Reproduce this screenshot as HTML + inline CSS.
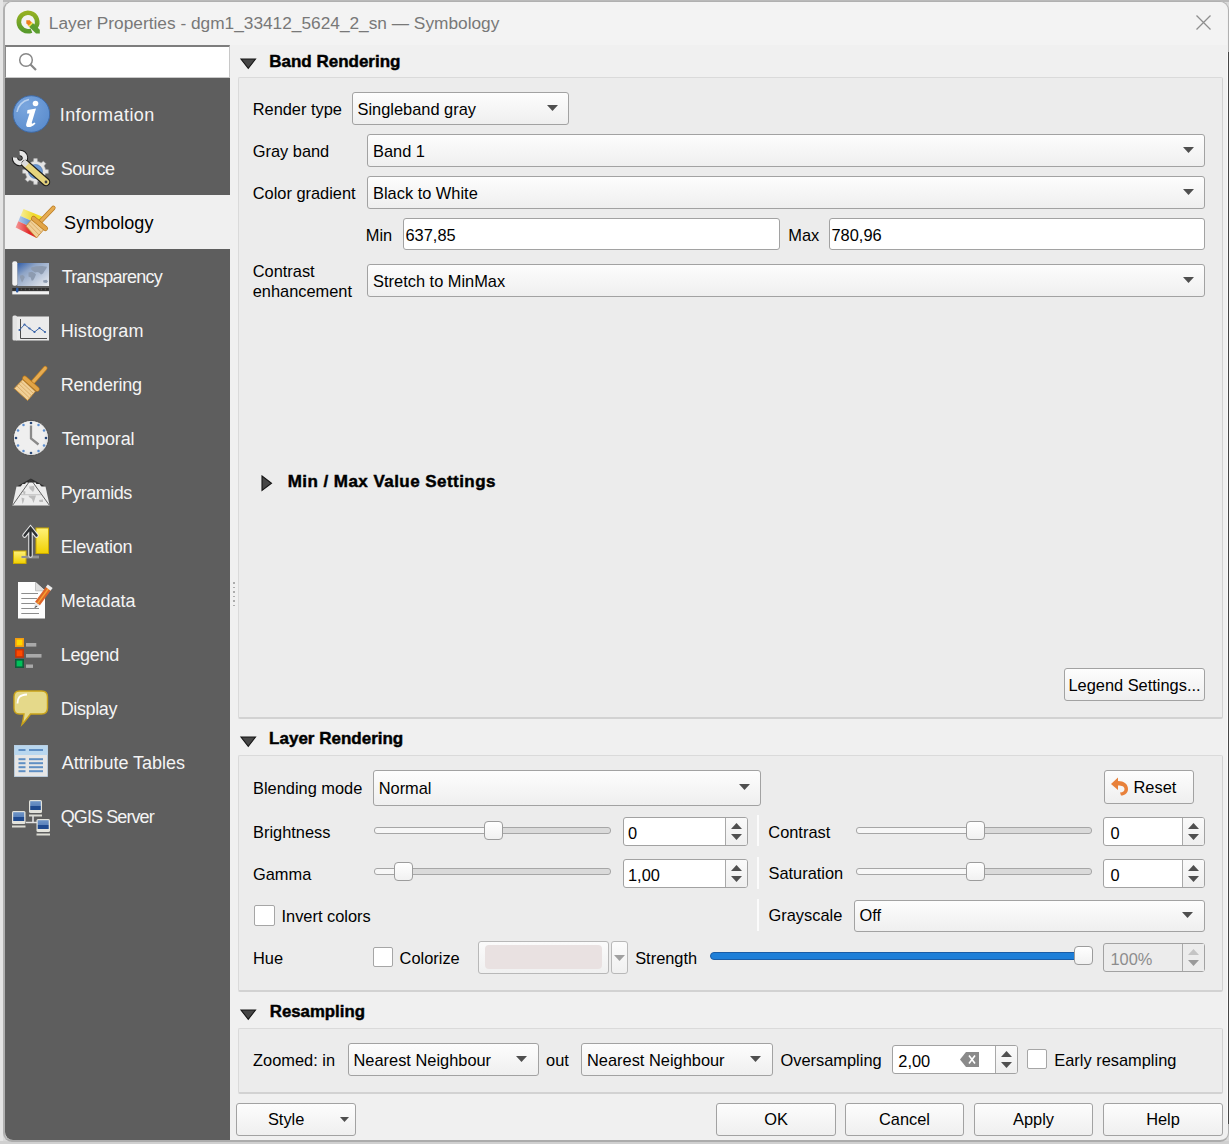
<!DOCTYPE html>
<html><head><meta charset="utf-8"><style>
html,body{margin:0;padding:0}
body{width:1229px;height:1144px;overflow:hidden;position:relative;background:#d9d9d9;font-family:"Liberation Sans",sans-serif}
.t{position:absolute;white-space:pre;line-height:1;font-family:"Liberation Sans",sans-serif}
svg{position:absolute;overflow:visible}
</style></head><body>
<div style="position:absolute;left:0px;top:0px;width:1229px;height:2px;box-sizing:border-box;background:#b9b9b9;"></div>
<div style="position:absolute;left:0px;top:0px;width:3px;height:1144px;box-sizing:border-box;background:#e4e4e4;"></div>
<div style="position:absolute;left:0px;top:1141px;width:1229px;height:3px;box-sizing:border-box;background:#d0d0d0;"></div>
<div style="position:absolute;left:3px;top:1px;width:1226px;height:1141px;box-sizing:border-box;background:#f0f0f0;border:1px solid #b0b0b0;border-left-width:2px;border-bottom:2px solid #acacac;border-radius:9px;"></div>
<div style="position:absolute;left:1227px;top:52px;width:1px;height:1072px;box-sizing:border-box;background:#fafafa;"></div>
<div style="position:absolute;left:1228px;top:52px;width:1px;height:1072px;box-sizing:border-box;background:#464646;"></div>
<div style="position:absolute;left:5px;top:2px;width:1222px;height:43px;box-sizing:border-box;background:#f3f3f3;border-radius:8px 8px 0 0;"></div>
<div class="t" style="left:48.8px;top:14.66px;font-size:17.3px;color:#787878;font-weight:400;">Layer Properties - dgm1_33412_5624_2_sn — Symbology</div>
<svg style="left:1196px;top:15px" width="15" height="15"><path d="M0.5,0.5 L14.5,14.5 M14.5,0.5 L0.5,14.5" stroke="#8e8e8e" stroke-width="1.3"/></svg>
<svg style="left:13.7px;top:7.5px" width="28" height="28" viewBox="0 0 28 28">
<defs><linearGradient id="qg" x1="0" y1="0" x2="0" y2="1"><stop offset="0" stop-color="#93b023"/><stop offset="1" stop-color="#589a2c"/></linearGradient></defs>
<path d="M 21.54 19.28 A 9.2 9.2 0 1 0 17.45 22.53" fill="none" stroke="url(#qg)" stroke-width="4.6"/>
<path d="M14.8,18.6 L18.6,14.8 L25.8,21.8 L25.8,25.6 L22,25.6 Z" fill="#5c9e30"/>
<path d="M15.3,15.3 L17.2,17.2" stroke="#f2e34a" stroke-width="5.2"/>
<path d="M12.3,12.3 L15.8,12.3 L17.6,14.6 L14.8,17.4 L12.3,15.6 Z" fill="#ef7d1c"/>
</svg>
<div style="position:absolute;left:5px;top:45px;width:225px;height:33px;box-sizing:border-box;background:#fff;border-top:2px solid #7d7d7d;border-left:1px solid #8a8a8a;border-right:1px solid #c8c8c8;border-bottom:1px solid #c9c9c9;"></div>
<svg style="left:17px;top:51px" width="22" height="22"><circle cx="9" cy="9" r="6.3" fill="none" stroke="#878787" stroke-width="1.5"/><path d="M13.5,13.5 L19,19" stroke="#878787" stroke-width="2.2"/></svg>
<div style="position:absolute;left:5px;top:78px;width:225px;height:1062px;box-sizing:border-box;background:#5e5e5e;border-bottom-left-radius:8px;"></div>
<div style="position:absolute;left:5px;top:195px;width:225px;height:54px;box-sizing:border-box;background:#f0f0f0;"></div>
<div class="t" style="left:59.7px;top:105.76px;font-size:18px;color:#f4f4f4;font-weight:400;letter-spacing:0.46px;">Information</div>
<div class="t" style="left:60.7px;top:159.76px;font-size:18px;color:#f4f4f4;font-weight:400;letter-spacing:-0.54px;">Source</div>
<div class="t" style="left:64.1px;top:213.76px;font-size:18px;color:#000;font-weight:400;letter-spacing:0.03px;">Symbology</div>
<div class="t" style="left:61.7px;top:267.76px;font-size:18px;color:#f4f4f4;font-weight:400;letter-spacing:-0.75px;">Transparency</div>
<div class="t" style="left:60.7px;top:321.76px;font-size:18px;color:#f4f4f4;font-weight:400;letter-spacing:0.09px;">Histogram</div>
<div class="t" style="left:60.7px;top:375.76px;font-size:18px;color:#f4f4f4;font-weight:400;letter-spacing:-0.21px;">Rendering</div>
<div class="t" style="left:61.7px;top:429.76px;font-size:18px;color:#f4f4f4;font-weight:400;letter-spacing:-0.17px;">Temporal</div>
<div class="t" style="left:60.7px;top:483.76px;font-size:18px;color:#f4f4f4;font-weight:400;letter-spacing:-0.51px;">Pyramids</div>
<div class="t" style="left:60.7px;top:537.76px;font-size:18px;color:#f4f4f4;font-weight:400;letter-spacing:-0.28px;">Elevation</div>
<div class="t" style="left:60.7px;top:591.76px;font-size:18px;color:#f4f4f4;font-weight:400;letter-spacing:-0.03px;">Metadata</div>
<div class="t" style="left:60.7px;top:645.76px;font-size:18px;color:#f4f4f4;font-weight:400;letter-spacing:-0.30px;">Legend</div>
<div class="t" style="left:60.7px;top:699.76px;font-size:18px;color:#f4f4f4;font-weight:400;letter-spacing:-0.37px;">Display</div>
<div class="t" style="left:61.7px;top:753.76px;font-size:18px;color:#f4f4f4;font-weight:400;letter-spacing:-0.03px;">Attribute Tables</div>
<div class="t" style="left:60.7px;top:807.76px;font-size:18px;color:#f4f4f4;font-weight:400;letter-spacing:-0.90px;">QGIS Server</div>
<!-- Information -->
<svg style="left:12px;top:95px" width="39" height="39" viewBox="0 0 39 39">
<defs><radialGradient id="ig" cx="0.35" cy="0.3" r="0.8"><stop offset="0" stop-color="#7aa6de"/><stop offset="1" stop-color="#5a8ccd"/></radialGradient></defs>
<circle cx="19.4" cy="19" r="18.3" fill="url(#ig)" stroke="#3f6aa6" stroke-width="1"/>
<path d="M5,17 A15,15 0 0 1 17,4.5" fill="none" stroke="#b8d0ee" stroke-width="1.6"/>
<circle cx="23.5" cy="8.5" r="2.8" fill="#fff"/>
<path d="M15.5,15 L24,13.5 L19.8,27.5 C19.5,29 20.5,29 22.5,27.5 L23.5,28.5 C20.5,31.5 18,32.5 15.5,32 C14,31.5 13.8,30 14.5,28 L17.5,18.5 L15,18.5 Z" fill="#fff"/>
</svg>
<!-- Source: wrench + gear -->
<svg style="left:12px;top:149px" width="39" height="38" viewBox="0 0 39 38">
<path d="M32.92,18.60 L33.49,20.43 L36.38,20.77 L36.38,24.23 L33.49,24.57 L32.92,26.40 L32.03,28.10 L33.83,30.39 L31.39,32.83 L29.10,31.03 L27.40,31.92 L25.57,32.49 L25.23,35.38 L21.77,35.38 L21.43,32.49 L19.60,31.92 L17.90,31.03 L15.61,32.83 L13.17,30.39 L14.97,28.10 L14.08,26.40 L13.51,24.57 L10.62,24.23 L10.62,20.77 L13.51,20.43 L14.08,18.60 L14.97,16.90 L13.17,14.61 L15.61,12.17 L17.90,13.97 L19.60,13.08 L21.43,12.51 L21.77,9.62 L25.23,9.62 L25.57,12.51 L27.40,13.08 L29.10,13.97 L31.39,12.17 L33.83,14.61 L32.03,16.90 Z" fill="#e4e4e4" stroke="#a8a8a8" stroke-width="0.6"/>
<circle cx="23.5" cy="22.5" r="7" fill="#6b98d2" stroke="#4a72a8" stroke-width="0.6"/>
<path d="M7.56,4.02 A5,5 0 1 1 3.02,8.56" fill="none" stroke="#1e1e1e" stroke-width="6.4"/>
<path d="M7.56,4.02 A5,5 0 1 1 3.02,8.56" fill="none" stroke="#e6e6e6" stroke-width="4.4"/>
<path d="M13.5,15 L34,33" stroke="#1e1e1e" stroke-width="8.4" stroke-linecap="round"/>
<path d="M13.5,15 L34,33" stroke="#e6d47c" stroke-width="6.2" stroke-linecap="round"/>
<path d="M11,12.5 L15,16.3" stroke="#dcdcdc" stroke-width="5.5"/>
<circle cx="34" cy="33" r="1.4" fill="#444"/>
</svg>
<!-- Symbology: brush with paint -->
<svg style="left:14px;top:205px" width="42" height="36" viewBox="0 0 42 36">
<defs>
<linearGradient id="sy" x1="0" y1="0" x2="1" y2="0"><stop offset="0" stop-color="#f7ee9a"/><stop offset="0.6" stop-color="#f1da2c"/></linearGradient>
<linearGradient id="sb" x1="0" y1="0" x2="1" y2="0"><stop offset="0" stop-color="#b3cbea"/><stop offset="0.6" stop-color="#5f8fcf"/></linearGradient>
<linearGradient id="sr" x1="0" y1="0" x2="1" y2="0"><stop offset="0" stop-color="#f59a9a"/><stop offset="0.6" stop-color="#e12a2a"/></linearGradient>
</defs>
<path d="M9.5,4 L28,11.5 L25.95,19.63 L6.5,11.07 Z" fill="url(#sy)"/>
<path d="M6.5,11.07 L25.95,19.63 L24.44,25.62 L4.29,16.28 Z" fill="url(#sb)"/>
<path d="M4.29,16.28 L24.44,25.62 L22.6,32.9 L1.6,22.6 Z" fill="url(#sr)"/>
<path d="M39.3,3 L26,17" stroke="#b97b22" stroke-width="4.6" stroke-linecap="round"/>
<path d="M39.3,3 L26,17" stroke="#e6ac52" stroke-width="3.2" stroke-linecap="round"/>
<path d="M11.9,21.1 L19.2,12.8 L31.9,22.1 L22.6,32.9 Z" fill="#f0cf96" stroke="#c58a34" stroke-width="0.9"/>
<g stroke="#d6a55e" stroke-width="0.8"><path d="M14.5,19 L25,30 M16.5,16.8 L27.2,27.4 M18.5,14.5 L29.5,24.8"/></g>
<path d="M19.5,13.5 L31.5,23.5" stroke="#b8781c" stroke-width="5" stroke-linecap="round"/>
<path d="M19.5,13.5 L31.5,23.5" stroke="#e1a447" stroke-width="3.6" stroke-linecap="round"/>
</svg>
<!-- Transparency -->
<svg style="left:12px;top:261px" width="38" height="35" viewBox="0 0 38 35">
<defs><linearGradient id="tg" x1="0" y1="0" x2="1" y2="1"><stop offset="0" stop-color="#2f5ca8"/><stop offset="0.32" stop-color="#8ea4c6"/><stop offset="1" stop-color="#eceef1"/></linearGradient></defs>
<rect x="5.3" y="2" width="31.7" height="23" fill="url(#tg)"/>
<rect x="0.3" y="0.2" width="5" height="24.5" rx="2" fill="#f2f2f2"/>
<g fill="#8d9bb0">
<path d="M19,6.5 L24,5.2 L30,5 L35,5.8 L34,8 L32.5,10 L31,12.5 L29,13.5 L27,11.5 L25,11 L23,11.5 L21,10 L19.5,9 Z"/>
<path d="M16.5,11.5 L20,10.8 L22.5,12 L24,13.5 L22.5,17 L21,19.5 L19.5,19.5 L18.8,16.5 L16.5,15.5 Z"/>
<path d="M8,14.5 L11,14 L12.8,16 L11.5,19 L10,21.5 L9,19 L8,16.5 Z"/>
<path d="M31,19.5 L34.5,18.8 L36,20.5 L34.5,22 L31.5,21.5 Z"/>
</g>
<rect x="0.3" y="27" width="36.7" height="2.8" fill="#2e2e2e"/>
<g fill="#5a5a5a"><rect x="8.8" y="27.6" width="1" height="1.6"/><rect x="12.8" y="27.6" width="1" height="1.6"/><rect x="16.8" y="27.6" width="1" height="1.6"/><rect x="20.8" y="27.6" width="1" height="1.6"/><rect x="24.8" y="27.6" width="1" height="1.6"/><rect x="28.8" y="27.6" width="1" height="1.6"/><rect x="32.8" y="27.6" width="1" height="1.6"/></g>
<rect x="0.3" y="30.2" width="36.7" height="3.2" fill="#f1f1f1"/>
<rect x="4" y="26.8" width="2.4" height="4.8" rx="1" fill="#2a58a2"/>
</svg>
<!-- Histogram -->
<svg style="left:12px;top:315px" width="38" height="27" viewBox="0 0 38 27">
<rect x="4" y="1.5" width="33" height="24" fill="#ebebeb"/>
<rect x="0.5" y="0.5" width="4.5" height="25" rx="1.5" fill="#e4e4e4"/>
<path d="M8.5,4 L8.5,23.5 L35,23.5" fill="none" stroke="#3a3a3a" stroke-width="0.9"/>
<path d="M7.5,15 L12.5,9.5 L17.5,13.5 L22.5,17 L27.5,13 L33,17" fill="none" stroke="#3a64a8" stroke-width="1"/>
<g fill="#3a64a8"><circle cx="7.5" cy="15" r="1.1"/><circle cx="12.5" cy="9.5" r="1.1"/><circle cx="17.5" cy="13.5" r="1.1"/><circle cx="22.5" cy="17" r="1.1"/><circle cx="27.5" cy="13" r="1.1"/><circle cx="33" cy="17" r="1.1"/></g>
</svg>
<!-- Rendering brush -->
<svg style="left:14px;top:366px" width="35" height="36" viewBox="0 0 35 36">
<path d="M31.2,2.2 L18.8,16.2" stroke="#b97b22" stroke-width="4.6" stroke-linecap="round"/>
<path d="M31.2,2.2 L18.8,16.2" stroke="#e6ac52" stroke-width="3.2" stroke-linecap="round"/>
<path d="M0.2,22.4 L8.7,13.6 L21.3,25.4 L13.6,34.5 Z" fill="#f0cf96" stroke="#c58a34" stroke-width="0.9"/>
<g stroke="#d6a55e" stroke-width="0.8"><path d="M3,20 L15.5,32 M5,18 L17.5,29.8 M7,15.8 L19.5,27.5"/></g>
<path d="M10.7,12.2 L23.2,23.2" stroke="#b8781c" stroke-width="5" stroke-linecap="round"/>
<path d="M10.7,12.2 L23.2,23.2" stroke="#e1a447" stroke-width="3.6" stroke-linecap="round"/>
</svg>
<!-- Temporal clock -->
<svg style="left:12px;top:419px" width="38" height="38" viewBox="0 0 38 38">
<defs><radialGradient id="cg" cx="0.45" cy="0.45" r="0.6"><stop offset="0.7" stop-color="#efefef"/><stop offset="1" stop-color="#dcdcdc"/></radialGradient></defs>
<circle cx="19" cy="19" r="17.6" fill="url(#cg)" stroke="#484848" stroke-width="0.9"/>
<g fill="#5d8fd0"><circle cx="26.5" cy="6" r="1.25"/><circle cx="32" cy="11.5" r="1.25"/><circle cx="32" cy="26.5" r="1.25"/><circle cx="26.5" cy="32" r="1.25"/><circle cx="11.5" cy="32" r="1.25"/><circle cx="6" cy="26.5" r="1.25"/><circle cx="6" cy="11.5" r="1.25"/><circle cx="11.5" cy="6" r="1.25"/></g>
<g fill="#2a4a7c"><circle cx="19" cy="4" r="1.3"/><circle cx="19" cy="34" r="1.3"/><circle cx="4" cy="19" r="1.3"/><circle cx="34" cy="19" r="1.3"/></g>
<path d="M19,6.5 L19,19.5 L26.5,25.5" fill="none" stroke="#8a8a8a" stroke-width="2.3"/>
</svg>
<!-- Pyramids -->
<svg style="left:12px;top:478px" width="39" height="29" viewBox="0 0 39 29">
<path d="M18.85,0.6 L4,9 L34,9 Z" fill="#2f2f2f"/>
<path d="M10.5,6 L27.5,6 L30,9.5 L8,9.5 Z" fill="#e9e9e9"/>
<path d="M4.5,8.6 L33.5,8.6 L37.6,27.4 L0.4,27.4 Z" fill="#ececec"/>
<path d="M14,4.5 L23.5,4.5 L25,7 L12.5,7 Z" fill="#f0f0f0"/>
<g fill="#bcbcbc"><path d="M17,8.5 L22,8 L22.5,11 L21,14 L19,12 L17.5,10.5 Z M11,13 L13.5,13.5 L13,17 L11.5,16 Z M16.5,17.5 L24,17.5 L22.5,22 L21.5,25 L20,21 L17,19 Z M9.5,19.5 L12.5,20.5 L11.5,24 L10.5,26 L9.8,22 Z M27,22 L31,21.5 L31,24 L27.5,24 Z"/></g>
<path d="M9,16.7 L29,16.7" stroke="#c4c4c4" stroke-width="1"/>
<path d="M18.85,1.5 L0.8,27 M18.85,1.5 L37.2,27" stroke="#3c3c3c" stroke-width="0.8" fill="none"/>
</svg>
<!-- Elevation -->
<svg style="left:12px;top:525px" width="39" height="40" viewBox="0 0 39 40">
<defs><linearGradient id="ey" x1="0" y1="0" x2="0" y2="1"><stop offset="0" stop-color="#fff27a"/><stop offset="1" stop-color="#f0d000"/></linearGradient></defs>
<rect x="24" y="3" width="12.5" height="25.5" fill="url(#ey)" stroke="#c9a800" stroke-width="1"/>
<rect x="1.5" y="26" width="12.5" height="12.5" fill="url(#ey)" stroke="#c9a800" stroke-width="1"/>
<path d="M9.5,32 L27,32" stroke="#c8c8c8" stroke-width="2.4"/>
<path d="M9.5,32 L27,32" stroke="#5a5a5a" stroke-width="1"/>
<path d="M18.5,30.5 L18.5,3.5 M12.5,10.5 L18.5,3 L24.5,10.5" fill="none" stroke="#e8e8e8" stroke-width="4.5" stroke-linecap="round"/>
<path d="M18.5,30.5 L18.5,3.5 M12.5,10.5 L18.5,3 L24.5,10.5" fill="none" stroke="#2d3033" stroke-width="2.4" stroke-linecap="round"/>
</svg>
<!-- Metadata -->
<svg style="left:17px;top:581px" width="34" height="39" viewBox="0 0 34 39">
<path d="M1,1 L18.5,1 L28,9.5 L28,37.5 L1,37.5 Z" fill="#fdfdfd"/>
<path d="M18.5,1 L18.5,9.8 L28,9.8 Z" fill="#dedede"/>
<path d="M18.5,1 L18.5,9.8 L28,9.8" fill="none" stroke="#b9b9b9" stroke-width="0.8"/>
<g stroke="#8c8c8c" stroke-width="1.2"><path d="M4.3,12.5 L21,12.5 M4.3,17.5 L20,17.5 M4.3,22.5 L19,22.5 M4.3,27.5 L22,27.5 M4.3,32.5 L22,32.5"/></g>
<path d="M18.08,20.73 L22.92,24.27 L17.1,27.6 Z" fill="#e6e6e6"/>
<path d="M18.9,24.5 L20.5,25.6 L17.1,27.6 Z" fill="#555"/>
<path d="M20.5,22.5 L31.5,7.5" stroke="#dd6428" stroke-width="6"/>
<path d="M20.5,22.5 L31.5,7.5" stroke="#f5a032" stroke-width="1.4"/>
<path d="M31.2,7.9 L33.2,5.2" stroke="#ececec" stroke-width="6"/>
</svg>
<!-- Legend -->
<svg style="left:14px;top:637px" width="30" height="32" viewBox="0 0 30 32">
<rect x="1.8" y="1.8" width="7.4" height="7.4" fill="#ffd700" stroke="#f39c12" stroke-width="1.6"/>
<rect x="1.8" y="12.6" width="7.4" height="7.4" fill="#ff4a00" stroke="#c0340a" stroke-width="1.6"/>
<rect x="1.8" y="22.8" width="7.4" height="7.4" fill="#00c15a" stroke="#0f5c3a" stroke-width="1.6"/>
<rect x="12" y="6" width="10.3" height="3.6" fill="#a9a9a9"/>
<rect x="12" y="17" width="15.5" height="3.6" fill="#a9a9a9"/>
<rect x="12" y="27.5" width="7" height="3.4" fill="#a9a9a9"/>
</svg>
<!-- Display bubble -->
<svg style="left:13px;top:690px" width="36" height="36" viewBox="0 0 36 36">
<path d="M6.5,1 L28.5,1 C32.5,1 34.5,3 34.5,7 L34.5,18 C34.5,22 32.5,24 28.5,24 L17.5,24 C14.5,28 12,31.5 9,34.5 C10,31 10.5,27.5 11,24 L6.5,24 C2.5,24 1,22 1,18 L1,7 C1,3 2.5,1 6.5,1 Z" fill="#e5d98a" stroke="#c9a21a" stroke-width="1.4"/>
<path d="M4.5,13.5 C4.5,8 6,5 14,4.5" fill="none" stroke="#fff" stroke-width="1.8"/>
</svg>
<!-- Attribute Tables -->
<svg style="left:14px;top:745px" width="34" height="32" viewBox="0 0 34 32">
<rect x="0.5" y="0.5" width="33" height="31" fill="#e6e6e6" stroke="#bcd3e8" stroke-width="0.8"/>
<rect x="0.5" y="0.5" width="33" height="9.5" fill="#b9d7ef"/>
<g fill="#5f8fc4"><rect x="4.5" y="4" width="7" height="2"/><rect x="15" y="4" width="14" height="2"/>
<rect x="4.5" y="13.2" width="7" height="2"/><rect x="15" y="13.2" width="14" height="2"/>
<rect x="4.5" y="17.2" width="7" height="2"/><rect x="15" y="17.2" width="14" height="2"/>
<rect x="4.5" y="21.2" width="7" height="2"/><rect x="15" y="21.2" width="14" height="2"/>
<rect x="4.5" y="25.2" width="7" height="2"/><rect x="15" y="25.2" width="14" height="2"/></g>
</svg>
<!-- QGIS Server -->
<svg style="left:11px;top:799px" width="40" height="38" viewBox="0 0 40 38">
<defs><linearGradient id="mg" x1="0" y1="0" x2="0" y2="1"><stop offset="0" stop-color="#6e95c8"/><stop offset="0.55" stop-color="#5b82ba"/><stop offset="0.6" stop-color="#1f4a8f"/><stop offset="1" stop-color="#1f4a8f"/></linearGradient></defs>
<path d="M22,23.5 L22,17 M15,23.5 L26,23.5" stroke="#e0e0e0" stroke-width="1.6"/>
<g>
<rect x="18" y="1" width="13" height="13" rx="1.5" fill="#e3e3dc"/><rect x="19.2" y="2.2" width="10.6" height="8.8" fill="url(#mg)"/><rect x="18" y="15.5" width="13" height="2" fill="#dcdcd4"/>
<rect x="1" y="12" width="13.5" height="13" rx="1.5" fill="#e3e3dc"/><rect x="2.2" y="13.2" width="11" height="8.8" fill="url(#mg)"/><rect x="1" y="26.5" width="13.5" height="2" fill="#dcdcd4"/>
<rect x="25.5" y="20" width="13.5" height="13" rx="1.5" fill="#e3e3dc"/><rect x="26.7" y="21.2" width="11" height="8.8" fill="url(#mg)"/><rect x="25.5" y="34.5" width="13.5" height="2" fill="#dcdcd4"/>
</g>
</svg>
<div style="position:absolute;left:233px;top:582px;width:2px;height:2px;box-sizing:border-box;background:#acacac;"></div>
<div style="position:absolute;left:233px;top:587px;width:2px;height:1px;box-sizing:border-box;background:#acacac;"></div>
<div style="position:absolute;left:233px;top:591px;width:2px;height:2px;box-sizing:border-box;background:#acacac;"></div>
<div style="position:absolute;left:233px;top:596px;width:2px;height:1px;box-sizing:border-box;background:#acacac;"></div>
<div style="position:absolute;left:233px;top:600px;width:2px;height:2px;box-sizing:border-box;background:#acacac;"></div>
<div style="position:absolute;left:233px;top:605px;width:2px;height:1px;box-sizing:border-box;background:#acacac;"></div>
<svg style="position:absolute;left:240px;top:58px" width="17" height="12"><polygon points="1,1 15.5,1 8.25,10.3" fill="#464646" stroke="#151515" stroke-width="1.1" stroke-linejoin="miter"/></svg>
<div class="t" style="left:269.2px;top:52.51px;font-size:17px;color:#000;font-weight:700;-webkit-text-stroke:0.45px #000;">Band Rendering</div>
<div style="position:absolute;left:238px;top:77px;width:985px;height:642px;box-sizing:border-box;background:#ececec;border:1px solid #dadada;border-right-color:#d2d2d2;border-bottom:2px solid #d2d2d2;border-radius:2px;"></div>
<div class="t" style="left:252.7px;top:100.82px;font-size:16.4px;color:#000;font-weight:400;">Render type</div>
<div style="position:absolute;left:352px;top:92px;width:217px;height:33px;box-sizing:border-box;background:linear-gradient(#fdfdfd,#efefef);border:1px solid #a2a2a2;border-radius:3px;"></div>
<div class="t" style="left:357.5px;top:100.82px;font-size:16.4px;color:#000;font-weight:400;">Singleband gray</div>
<svg style="position:absolute;left:546.5px;top:104.9px" width="11" height="6"><polygon points="0,0 11,0 5.5,6" fill="#4f4f4f"/></svg>
<div class="t" style="left:252.7px;top:143.02px;font-size:16.4px;color:#000;font-weight:400;">Gray band</div>
<div style="position:absolute;left:367px;top:134px;width:838px;height:33px;box-sizing:border-box;background:linear-gradient(#fdfdfd,#efefef);border:1px solid #a2a2a2;border-radius:3px;"></div>
<div class="t" style="left:373.0px;top:143.02px;font-size:16.4px;color:#000;font-weight:400;">Band 1</div>
<svg style="position:absolute;left:1182.5px;top:146.9px" width="11" height="6"><polygon points="0,0 11,0 5.5,6" fill="#4f4f4f"/></svg>
<div class="t" style="left:252.7px;top:184.72px;font-size:16.4px;color:#000;font-weight:400;">Color gradient</div>
<div style="position:absolute;left:367px;top:176px;width:838px;height:33px;box-sizing:border-box;background:linear-gradient(#fdfdfd,#efefef);border:1px solid #a2a2a2;border-radius:3px;"></div>
<div class="t" style="left:373.0px;top:184.72px;font-size:16.4px;color:#000;font-weight:400;">Black to White</div>
<svg style="position:absolute;left:1182.5px;top:188.9px" width="11" height="6"><polygon points="0,0 11,0 5.5,6" fill="#4f4f4f"/></svg>
<div class="t" style="left:365.8px;top:227.02px;font-size:16.4px;color:#000;font-weight:400;">Min</div>
<div style="position:absolute;left:403px;top:218px;width:377px;height:32px;box-sizing:border-box;background:#fff;border:1px solid #a2a2a2;border-radius:3px;"></div>
<div class="t" style="left:405.5px;top:227.02px;font-size:16.4px;color:#000;font-weight:400;">637,85</div>
<div class="t" style="left:788.3px;top:227.02px;font-size:16.4px;color:#000;font-weight:400;">Max</div>
<div style="position:absolute;left:829px;top:218px;width:376px;height:32px;box-sizing:border-box;background:#fff;border:1px solid #a2a2a2;border-radius:3px;"></div>
<div class="t" style="left:831.5px;top:227.02px;font-size:16.4px;color:#000;font-weight:400;">780,96</div>
<div class="t" style="left:252.7px;top:262.62px;font-size:16.4px;color:#000;font-weight:400;">Contrast</div>
<div class="t" style="left:252.7px;top:283.42px;font-size:16.4px;color:#000;font-weight:400;">enhancement</div>
<div style="position:absolute;left:367px;top:264px;width:838px;height:33px;box-sizing:border-box;background:linear-gradient(#fdfdfd,#efefef);border:1px solid #a2a2a2;border-radius:3px;"></div>
<div class="t" style="left:373.1px;top:272.62px;font-size:16.4px;color:#000;font-weight:400;">Stretch to MinMax</div>
<svg style="position:absolute;left:1182.5px;top:276.9px" width="11" height="6"><polygon points="0,0 11,0 5.5,6" fill="#4f4f4f"/></svg>
<svg style="position:absolute;left:261px;top:474.5px" width="12" height="17"><polygon points="1,1 10.5,8.25 1,15.5" fill="#464646" stroke="#151515" stroke-width="1.1"/></svg>
<div class="t" style="left:287.7px;top:472.61px;font-size:17px;color:#000;font-weight:700;-webkit-text-stroke:0.45px #000;letter-spacing:0.45px;">Min / Max Value Settings</div>
<div style="position:absolute;left:1064px;top:668px;width:141px;height:33px;box-sizing:border-box;background:linear-gradient(#fdfdfd,#efefef);border:1px solid #a2a2a2;border-radius:3px;"></div>
<div class="t" style="left:1064px;width:141px;text-align:center;top:677.02px;font-size:16.4px">Legend Settings...</div>
<svg style="position:absolute;left:240px;top:736px" width="17" height="12"><polygon points="1,1 15.5,1 8.25,10.3" fill="#464646" stroke="#151515" stroke-width="1.1" stroke-linejoin="miter"/></svg>
<div class="t" style="left:269.1px;top:730.31px;font-size:17px;color:#000;font-weight:700;-webkit-text-stroke:0.45px #000;">Layer Rendering</div>
<div style="position:absolute;left:238px;top:755px;width:985px;height:237px;box-sizing:border-box;background:#ececec;border:1px solid #dadada;border-right-color:#d2d2d2;border-bottom:2px solid #d2d2d2;border-radius:2px;"></div>
<div class="t" style="left:253.0px;top:780.32px;font-size:16.4px;color:#000;font-weight:400;">Blending mode</div>
<div style="position:absolute;left:373px;top:770px;width:388px;height:36px;box-sizing:border-box;background:linear-gradient(#fdfdfd,#efefef);border:1px solid #a2a2a2;border-radius:3px;"></div>
<div class="t" style="left:378.7px;top:780.22px;font-size:16.4px;color:#000;font-weight:400;">Normal</div>
<svg style="position:absolute;left:739.0px;top:784.4px" width="11" height="6"><polygon points="0,0 11,0 5.5,6" fill="#4f4f4f"/></svg>
<div style="position:absolute;left:1104px;top:770px;width:90px;height:34px;box-sizing:border-box;background:linear-gradient(#fdfdfd,#efefef);border:1px solid #a2a2a2;border-radius:3px;"></div>
<div class="t" style="left:1104px;width:90px;text-align:center;top:778.72px;font-size:16.4px"></div>
<div class="t" style="left:1133.5px;top:778.72px;font-size:16.4px;color:#000;font-weight:400;">Reset</div>
<svg style="left:1110px;top:777px" width="20" height="19" viewBox="0 0 20 19"><path d="M1,7 L8,0.5 L8,4 C14,4 18,7 18,12 C18,16 15,18.5 11,18.5 L10,15.5 C13,15.5 14.5,14 14.5,12 C14.5,9.5 12,8.5 8,8.5 L8,13 Z" fill="#e8813a"/></svg>
<div class="t" style="left:253.0px;top:823.92px;font-size:16.4px;color:#000;font-weight:400;">Brightness</div>
<div style="position:absolute;left:374px;top:827px;width:237px;height:7px;box-sizing:border-box;background:linear-gradient(90deg,#f7f7f7 0,#f7f7f7 110px,#dadada 110px);border:1px solid #a6a6a6;border-radius:3px;"></div>
<div style="position:absolute;left:484px;top:821px;width:19px;height:19px;box-sizing:border-box;background:linear-gradient(#ffffff,#f1f1f1);border:1px solid #9c9c9c;border-radius:4px;"></div>
<div style="position:absolute;left:623px;top:817px;width:125px;height:29px;box-sizing:border-box;background:#fff;border:1px solid #a2a2a2;border-radius:3px;"></div>
<div style="position:absolute;left:726px;top:818px;width:21px;height:27px;box-sizing:border-box;background:linear-gradient(#fafafa,#efefef);border-radius:0 2px 2px 0;"></div>
<div style="position:absolute;left:725px;top:818px;width:1px;height:27px;box-sizing:border-box;background:#a9a9a9;"></div>
<div class="t" style="left:628.0px;top:825.02px;font-size:16.4px;color:#000;font-weight:400;">0</div>
<svg style="position:absolute;left:731.0px;top:823.0px" width="11" height="6"><polygon points="0,6 11,6 5.5,0" fill="#505050"/></svg>
<svg style="position:absolute;left:731.0px;top:834.0px" width="11" height="6"><polygon points="0,0 11,0 5.5,6" fill="#505050"/></svg>
<div style="position:absolute;left:757px;top:815px;width:2px;height:31px;box-sizing:border-box;background:#fbfbfb;"></div>
<div class="t" style="left:768.3px;top:824.12px;font-size:16.4px;color:#000;font-weight:400;">Contrast</div>
<div style="position:absolute;left:856px;top:827px;width:236px;height:7px;box-sizing:border-box;background:linear-gradient(90deg,#f7f7f7 0,#f7f7f7 110px,#dadada 110px);border:1px solid #a6a6a6;border-radius:3px;"></div>
<div style="position:absolute;left:966px;top:821px;width:19px;height:19px;box-sizing:border-box;background:linear-gradient(#ffffff,#f1f1f1);border:1px solid #9c9c9c;border-radius:4px;"></div>
<div style="position:absolute;left:1103px;top:817px;width:102px;height:29px;box-sizing:border-box;background:#fff;border:1px solid #a2a2a2;border-radius:3px;"></div>
<div style="position:absolute;left:1183px;top:818px;width:21px;height:27px;box-sizing:border-box;background:linear-gradient(#fafafa,#efefef);border-radius:0 2px 2px 0;"></div>
<div style="position:absolute;left:1182px;top:818px;width:1px;height:27px;box-sizing:border-box;background:#a9a9a9;"></div>
<div class="t" style="left:1110.5px;top:825.02px;font-size:16.4px;color:#000;font-weight:400;">0</div>
<svg style="position:absolute;left:1188.0px;top:823.0px" width="11" height="6"><polygon points="0,6 11,6 5.5,0" fill="#505050"/></svg>
<svg style="position:absolute;left:1188.0px;top:834.0px" width="11" height="6"><polygon points="0,0 11,0 5.5,6" fill="#505050"/></svg>
<div class="t" style="left:253.0px;top:865.92px;font-size:16.4px;color:#000;font-weight:400;">Gamma</div>
<div style="position:absolute;left:374px;top:868px;width:237px;height:7px;box-sizing:border-box;background:linear-gradient(90deg,#f7f7f7 0,#f7f7f7 20px,#dadada 20px);border:1px solid #a6a6a6;border-radius:3px;"></div>
<div style="position:absolute;left:394px;top:862px;width:19px;height:19px;box-sizing:border-box;background:linear-gradient(#ffffff,#f1f1f1);border:1px solid #9c9c9c;border-radius:4px;"></div>
<div style="position:absolute;left:623px;top:859px;width:125px;height:29px;box-sizing:border-box;background:#fff;border:1px solid #a2a2a2;border-radius:3px;"></div>
<div style="position:absolute;left:726px;top:860px;width:21px;height:27px;box-sizing:border-box;background:linear-gradient(#fafafa,#efefef);border-radius:0 2px 2px 0;"></div>
<div style="position:absolute;left:725px;top:860px;width:1px;height:27px;box-sizing:border-box;background:#a9a9a9;"></div>
<div class="t" style="left:628.0px;top:867.02px;font-size:16.4px;color:#000;font-weight:400;">1,00</div>
<svg style="position:absolute;left:731.0px;top:865.0px" width="11" height="6"><polygon points="0,6 11,6 5.5,0" fill="#505050"/></svg>
<svg style="position:absolute;left:731.0px;top:876.0px" width="11" height="6"><polygon points="0,0 11,0 5.5,6" fill="#505050"/></svg>
<div style="position:absolute;left:757px;top:857px;width:2px;height:32px;box-sizing:border-box;background:#fbfbfb;"></div>
<div class="t" style="left:768.5px;top:865.42px;font-size:16.4px;color:#000;font-weight:400;">Saturation</div>
<div style="position:absolute;left:856px;top:868px;width:236px;height:7px;box-sizing:border-box;background:linear-gradient(90deg,#f7f7f7 0,#f7f7f7 110px,#dadada 110px);border:1px solid #a6a6a6;border-radius:3px;"></div>
<div style="position:absolute;left:966px;top:862px;width:19px;height:19px;box-sizing:border-box;background:linear-gradient(#ffffff,#f1f1f1);border:1px solid #9c9c9c;border-radius:4px;"></div>
<div style="position:absolute;left:1103px;top:859px;width:102px;height:29px;box-sizing:border-box;background:#fff;border:1px solid #a2a2a2;border-radius:3px;"></div>
<div style="position:absolute;left:1183px;top:860px;width:21px;height:27px;box-sizing:border-box;background:linear-gradient(#fafafa,#efefef);border-radius:0 2px 2px 0;"></div>
<div style="position:absolute;left:1182px;top:860px;width:1px;height:27px;box-sizing:border-box;background:#a9a9a9;"></div>
<div class="t" style="left:1110.5px;top:867.02px;font-size:16.4px;color:#000;font-weight:400;">0</div>
<svg style="position:absolute;left:1188.0px;top:865.0px" width="11" height="6"><polygon points="0,6 11,6 5.5,0" fill="#505050"/></svg>
<svg style="position:absolute;left:1188.0px;top:876.0px" width="11" height="6"><polygon points="0,0 11,0 5.5,6" fill="#505050"/></svg>
<div style="position:absolute;left:254px;top:905px;width:21px;height:21px;box-sizing:border-box;background:#fff;border:1px solid #a6a6a6;border-radius:2px;"></div>
<div class="t" style="left:281.5px;top:907.72px;font-size:16.4px;color:#000;font-weight:400;">Invert colors</div>
<div style="position:absolute;left:757px;top:899px;width:2px;height:32px;box-sizing:border-box;background:#fbfbfb;"></div>
<div class="t" style="left:768.5px;top:907.42px;font-size:16.4px;color:#000;font-weight:400;">Grayscale</div>
<div style="position:absolute;left:854px;top:900px;width:351px;height:32px;box-sizing:border-box;background:linear-gradient(#fdfdfd,#efefef);border:1px solid #a2a2a2;border-radius:3px;"></div>
<div class="t" style="left:859.5px;top:907.42px;font-size:16.4px;color:#000;font-weight:400;">Off</div>
<svg style="position:absolute;left:1181.5px;top:912.4px" width="11" height="6"><polygon points="0,0 11,0 5.5,6" fill="#4f4f4f"/></svg>
<div class="t" style="left:253.0px;top:949.92px;font-size:16.4px;color:#000;font-weight:400;">Hue</div>
<div style="position:absolute;left:373px;top:947px;width:20px;height:20px;box-sizing:border-box;background:#fff;border:1px solid #a6a6a6;border-radius:2px;"></div>
<div class="t" style="left:399.6px;top:949.92px;font-size:16.4px;color:#000;font-weight:400;">Colorize</div>
<div style="position:absolute;left:478px;top:941px;width:131px;height:33px;box-sizing:border-box;background:linear-gradient(#fbfbfb,#f0f0f0);border:1px solid #b8b8b8;border-radius:3px;"></div>
<div style="position:absolute;left:485px;top:945px;width:117px;height:24px;box-sizing:border-box;background:#e9e1e1;border-radius:4px;"></div>
<div style="position:absolute;left:611px;top:941px;width:17px;height:33px;box-sizing:border-box;background:linear-gradient(#fbfbfb,#f0f0f0);border:1px solid #b8b8b8;border-radius:3px;"></div>
<svg style="position:absolute;left:614.0px;top:955.0px" width="11" height="6"><polygon points="0,0 11,0 5.5,6" fill="#a0a0a0"/></svg>
<div class="t" style="left:635.2px;top:949.92px;font-size:16.4px;color:#000;font-weight:400;">Strength</div>
<div style="position:absolute;left:710px;top:952px;width:370px;height:8px;box-sizing:border-box;background:#1e7fd8;border:1px solid #1a5da6;border-radius:4px;"></div>
<div style="position:absolute;left:1074px;top:946px;width:19px;height:19px;box-sizing:border-box;background:linear-gradient(#ffffff,#f1f1f1);border:1px solid #9c9c9c;border-radius:4px;"></div>
<div style="position:absolute;left:1103px;top:943px;width:102px;height:29px;box-sizing:border-box;background:#ececec;border:1px solid #a2a2a2;border-radius:3px;"></div>
<div style="position:absolute;left:1183px;top:944px;width:21px;height:27px;box-sizing:border-box;background:#ececec;"></div>
<div style="position:absolute;left:1182px;top:944px;width:1px;height:27px;box-sizing:border-box;background:#a9a9a9;"></div>
<div class="t" style="left:1110.5px;top:950.62px;font-size:16.4px;color:#8c8c8c;font-weight:400;">100%</div>
<svg style="position:absolute;left:1188.0px;top:949.0px" width="11" height="6"><polygon points="0,6 11,6 5.5,0" fill="#c4c4c4"/></svg>
<svg style="position:absolute;left:1188.0px;top:960.0px" width="11" height="6"><polygon points="0,0 11,0 5.5,6" fill="#9a9a9a"/></svg>
<svg style="position:absolute;left:240px;top:1009px" width="17" height="12"><polygon points="1,1 15.5,1 8.25,10.3" fill="#464646" stroke="#151515" stroke-width="1.1" stroke-linejoin="miter"/></svg>
<div class="t" style="left:269.8px;top:1004.08px;font-size:16.8px;color:#000;font-weight:700;-webkit-text-stroke:0.45px #000;">Resampling</div>
<div style="position:absolute;left:238px;top:1028px;width:985px;height:66px;box-sizing:border-box;background:#ececec;border:1px solid #dadada;border-right-color:#d2d2d2;border-bottom:2px solid #d2d2d2;border-radius:2px;"></div>
<div class="t" style="left:253.0px;top:1051.92px;font-size:16.4px;color:#000;font-weight:400;">Zoomed: in</div>
<div style="position:absolute;left:348px;top:1043px;width:191px;height:33px;box-sizing:border-box;background:linear-gradient(#fdfdfd,#efefef);border:1px solid #a2a2a2;border-radius:3px;"></div>
<div class="t" style="left:353.5px;top:1051.92px;font-size:16.4px;color:#000;font-weight:400;">Nearest Neighbour</div>
<svg style="position:absolute;left:515.5px;top:1055.9px" width="11" height="6"><polygon points="0,0 11,0 5.5,6" fill="#4f4f4f"/></svg>
<div class="t" style="left:546.1px;top:1051.92px;font-size:16.4px;color:#000;font-weight:400;">out</div>
<div style="position:absolute;left:581px;top:1043px;width:192px;height:33px;box-sizing:border-box;background:linear-gradient(#fdfdfd,#efefef);border:1px solid #a2a2a2;border-radius:3px;"></div>
<div class="t" style="left:587.0px;top:1051.92px;font-size:16.4px;color:#000;font-weight:400;">Nearest Neighbour</div>
<svg style="position:absolute;left:749.5px;top:1055.9px" width="11" height="6"><polygon points="0,0 11,0 5.5,6" fill="#4f4f4f"/></svg>
<div class="t" style="left:780.5px;top:1051.92px;font-size:16.4px;color:#000;font-weight:400;">Oversampling</div>
<div style="position:absolute;left:892px;top:1045px;width:126px;height:29px;box-sizing:border-box;background:#fff;border:1px solid #a2a2a2;border-radius:3px;"></div>
<div style="position:absolute;left:996px;top:1046px;width:21px;height:27px;box-sizing:border-box;background:linear-gradient(#fafafa,#efefef);border-radius:0 2px 2px 0;"></div>
<div style="position:absolute;left:995px;top:1046px;width:1px;height:27px;box-sizing:border-box;background:#a9a9a9;"></div>
<div class="t" style="left:898.3px;top:1052.62px;font-size:16.4px;color:#000;font-weight:400;">2,00</div>
<svg style="position:absolute;left:1001.0px;top:1051.0px" width="11" height="6"><polygon points="0,6 11,6 5.5,0" fill="#505050"/></svg>
<svg style="position:absolute;left:1001.0px;top:1062.0px" width="11" height="6"><polygon points="0,0 11,0 5.5,6" fill="#505050"/></svg>
<svg style="left:960px;top:1052px" width="19" height="15" viewBox="0 0 19 15"><path d="M0,7.5 L6,0 L19,0 L19,15 L6,15 Z" fill="#8a8a8a"/><path d="M9,3.5 L15,11.5 M15,3.5 L9,11.5" stroke="#fff" stroke-width="1.6"/></svg>
<div style="position:absolute;left:1027px;top:1049px;width:20px;height:20px;box-sizing:border-box;background:#fff;border:1px solid #a6a6a6;border-radius:2px;"></div>
<div class="t" style="left:1054.3px;top:1051.92px;font-size:16.4px;color:#000;font-weight:400;">Early resampling</div>
<div style="position:absolute;left:236px;top:1103px;width:120px;height:33px;box-sizing:border-box;background:linear-gradient(#fdfdfd,#efefef);border:1px solid #a2a2a2;border-radius:3px;"></div>
<div class="t" style="left:267.9px;top:1111.42px;font-size:16.4px;color:#000;font-weight:400;">Style</div>
<svg style="position:absolute;left:340.0px;top:1117.0px" width="9" height="5"><polygon points="0,0 9,0 4.5,5" fill="#4f4f4f"/></svg>
<div style="position:absolute;left:716px;top:1103px;width:120px;height:33px;box-sizing:border-box;background:linear-gradient(#fdfdfd,#efefef);border:1px solid #a2a2a2;border-radius:3px;"></div>
<div class="t" style="left:716px;width:120px;text-align:center;top:1111.42px;font-size:16.4px">OK</div>
<div style="position:absolute;left:845px;top:1103px;width:119px;height:33px;box-sizing:border-box;background:linear-gradient(#fdfdfd,#efefef);border:1px solid #a2a2a2;border-radius:3px;"></div>
<div class="t" style="left:845px;width:119px;text-align:center;top:1111.42px;font-size:16.4px">Cancel</div>
<div style="position:absolute;left:974px;top:1103px;width:119px;height:33px;box-sizing:border-box;background:linear-gradient(#fdfdfd,#efefef);border:1px solid #a2a2a2;border-radius:3px;"></div>
<div class="t" style="left:974px;width:119px;text-align:center;top:1111.42px;font-size:16.4px">Apply</div>
<div style="position:absolute;left:1103px;top:1103px;width:120px;height:33px;box-sizing:border-box;background:linear-gradient(#fdfdfd,#efefef);border:1px solid #a2a2a2;border-radius:3px;"></div>
<div class="t" style="left:1103px;width:120px;text-align:center;top:1111.42px;font-size:16.4px">Help</div>
</body></html>
